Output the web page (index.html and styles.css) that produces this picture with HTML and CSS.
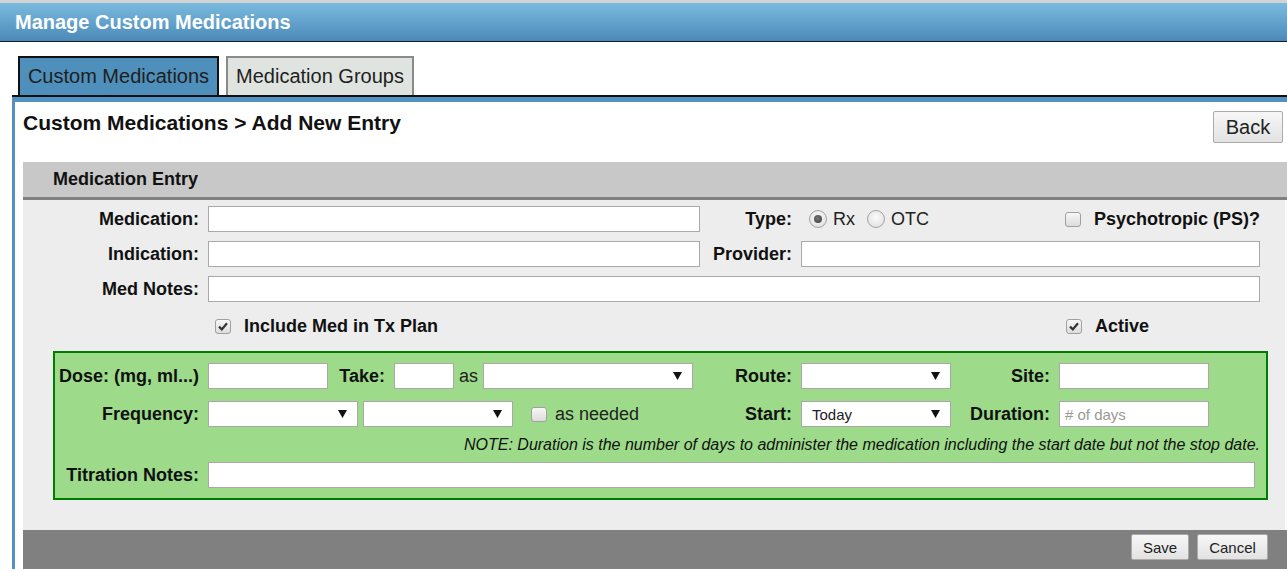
FILE: index.html
```html
<!DOCTYPE html>
<html>
<head>
<meta charset="utf-8">
<title>Manage Custom Medications</title>
<link rel="stylesheet" href="styles.css">
</head>
<body>
<header class="topbar"><h1 class="topbar-title">Manage Custom Medications</h1></header>
<nav class="tabs">
  <div class="tab tab-active">Custom Medications</div>
  <div class="tab tab-idle">Medication Groups</div>
</nav>
<main class="panel">
  <div class="title-row">
    <h2 class="page-title">Custom Medications &gt; Add New Entry</h2>
    <button class="btn btn-back">Back</button>
  </div>
  <section class="entry">
    <div class="entry-head">Medication Entry</div>
    <div class="entry-body">
      <div class="top-row">
        <div class="lbl">Medication:</div>
        <div class="field"></div>
        <div class="lbl">Type:</div>
        <div class="cell-flex">
          <div class="radios">
            <span class="radio radio-on"></span><span class="opt-text rx">Rx</span>
            <span class="radio"></span><span class="opt-text">OTC</span>
          </div>
          <span class="chk"></span><span class="chk-label">Psychotropic (PS)?</span>
        </div>
      </div>
      <div class="top-row gap9">
        <div class="lbl">Indication:</div>
        <div class="field"></div>
        <div class="lbl">Provider:</div>
        <div class="field"></div>
      </div>
      <div class="top-row gap9">
        <div class="lbl">Med Notes:</div>
        <div class="field span-rest"></div>
      </div>
      <div class="top-row check-row">
        <div></div>
        <div class="cell-flex pad7">
          <span class="chk chk-on"><svg viewBox="0 0 16 15" width="16" height="15"><path d="M4 7.6 L6.8 10.4 L12 4.2" fill="none" stroke="#333" stroke-width="2.2"/></svg></span><span class="chk-label">Include Med in Tx Plan</span>
        </div>
        <div></div>
        <div class="cell-flex pad265">
          <span class="chk chk-on"><svg viewBox="0 0 16 15" width="16" height="15"><path d="M4 7.6 L6.8 10.4 L12 4.2" fill="none" stroke="#333" stroke-width="2.2"/></svg></span><span class="chk-label">Active</span>
        </div>
      </div>

      <div class="dosing">
        <div class="g-row">
          <div class="lbl">Dose: (mg, ml...)</div>
          <div class="cell-flex">
            <div class="field w120"></div>
            <div class="lbl w66">Take:</div>
            <div class="field w60"></div>
            <span class="as-text">as</span>
            <div class="select grow"><span></span><svg class="arrow" viewBox="0 0 9 8" width="9" height="8"><polygon points="0,0 9,0 4.5,8" fill="#111"/></svg></div>
          </div>
          <div class="lbl">Route:</div>
          <div class="select"><span></span><svg class="arrow" viewBox="0 0 9 8" width="9" height="8"><polygon points="0,0 9,0 4.5,8" fill="#111"/></svg></div>
          <div class="lbl">Site:</div>
          <div class="field"></div>
        </div>
        <div class="g-row gap12">
          <div class="lbl">Frequency:</div>
          <div class="cell-flex">
            <div class="select w150"><span></span><svg class="arrow" viewBox="0 0 9 8" width="9" height="8"><polygon points="0,0 9,0 4.5,8" fill="#111"/></svg></div>
            <div class="select w150 ml5"><span></span><svg class="arrow" viewBox="0 0 9 8" width="9" height="8"><polygon points="0,0 9,0 4.5,8" fill="#111"/></svg></div>
            <span class="chk ml18"></span><span class="plain-text">as needed</span>
          </div>
          <div class="lbl">Start:</div>
          <div class="select"><span class="sel-text">Today</span><svg class="arrow" viewBox="0 0 9 8" width="9" height="8"><polygon points="0,0 9,0 4.5,8" fill="#111"/></svg></div>
          <div class="lbl">Duration:</div>
          <div class="field"><span class="placeholder"># of days</span></div>
        </div>
        <div class="note">NOTE: Duration is the number of days to administer the medication including the start date but not the stop date.</div>
        <div class="g-row">
          <div class="lbl">Titration Notes:</div>
          <div class="field span-titr"></div>
        </div>
      </div>
    </div>
    <div class="entry-foot">
      <button class="btn btn-small">Save</button>
      <button class="btn btn-small btn-cancel">Cancel</button>
    </div>
  </section>
</main>
</body>
</html>
```

FILE: styles.css
```css
html, body {
  margin: 0;
  padding: 0;
  background: #fff;
  overflow: hidden;
  height: 571px;
  font-family: "Liberation Sans", Arial, sans-serif;
  color: #111;
}

.topbar {
  border-top: 3px solid #d3d3d3;
  border-bottom: 1px solid #1a1a1a;
  background: linear-gradient(#7bbadf, #4b8ab8);
  height: 38px;
}
.topbar-title {
  margin: 0;
  padding-left: 15px;
  font-size: 20px;
  line-height: 38px;
  font-weight: bold;
  color: #fff;
}

.tabs {
  display: flex;
  gap: 7px;
  padding: 14px 0 0 18px;
  height: 39px;
}
.tab {
  box-sizing: border-box;
  height: 39px;
  font-size: 20px;
  line-height: 37px;
  text-align: center;
  color: #1e1e1e;
  border-style: solid;
  border-width: 2px 2px 0 2px;
}
.tab-active {
  width: 201px;
  background: #4f8fbb;
  border-color: #111;
}
.tab-idle {
  width: 188px;
  background: #e0e4e0;
  border-color: #8a8a8a;
}

.panel {
  display: block;
  margin-left: 12px;
  border-top: 2px solid #111;
  box-shadow: inset 3px 5px 0 #5392bf;
  padding: 5px 0 0 3px;
  height: 474px;
  box-sizing: border-box;
}

.title-row {
  display: flex;
  justify-content: space-between;
  align-items: flex-start;
  height: 60px;
  box-sizing: border-box;
  padding: 9px 4px 0 8px;
}
.page-title {
  margin: 0;
  font-size: 21px;
  line-height: 24px;
  font-weight: bold;
  color: #111;
}
.btn {
  font-family: "Liberation Sans", Arial, sans-serif;
  background: linear-gradient(#f7f7f7, #e2e2e2);
  border: 1px solid #ababab;
  border-radius: 2px;
  color: #222;
  padding: 0;
  cursor: pointer;
}
.btn-back {
  width: 70px;
  height: 32px;
  font-size: 20px;
}

.entry {
  margin-left: 8px;
}
.entry-head {
  height: 35px;
  line-height: 35px;
  background: #c8c8c8;
  border-bottom: 3px solid #808080;
  padding-left: 30px;
  font-size: 18px;
  font-weight: bold;
}
.entry-body {
  background: #ededed;
  margin-right: 2px;
  padding: 6px 0 30px 0;
}

.top-row {
  display: grid;
  grid-template-columns: 185px 492px 101px 459px;
  height: 26px;
  align-items: center;
}
.gap9 { margin-top: 9px; }
.check-row { margin-top: 11px; }

.lbl {
  box-sizing: border-box;
  text-align: right;
  padding-right: 9px;
  font-size: 18px;
  font-weight: bold;
  white-space: nowrap;
  color: #111;
}
.field {
  box-sizing: border-box;
  height: 26px;
  background: #fff;
  border: 1px solid #a9a9a9;
  display: flex;
  align-items: center;
}
.span-rest { grid-column: 2 / 5; }

.cell-flex {
  display: flex;
  align-items: center;
  height: 26px;
}
.pad7 { padding-left: 7px; }
.pad265 { padding-left: 265px; }

.radios {
  display: flex;
  align-items: center;
  width: 265px;
  box-sizing: border-box;
  padding-left: 8px;
}
.radio {
  box-sizing: border-box;
  width: 18px;
  height: 18px;
  border-radius: 50%;
  border: 1px solid #a3a3a3;
  background: radial-gradient(circle at 50% 40%, #fbfbfb, #dcdcdc);
  display: flex;
  align-items: center;
  justify-content: center;
}
.radio-on::after {
  content: "";
  width: 8px;
  height: 8px;
  border-radius: 50%;
  background: radial-gradient(circle at 45% 40%, #777, #3a3a3a);
}
.opt-text {
  font-size: 18px;
  margin-left: 6px;
  color: #222;
}
.rx { margin-right: 12px; }

.chk {
  box-sizing: border-box;
  width: 16px;
  height: 15px;
  border: 1px solid #a0a0a0;
  border-radius: 3px;
  background: linear-gradient(#f7f7f7, #dcdcdc);
  display: flex;
  align-items: center;
  justify-content: center;
  flex: none;
}
.chk svg { display: block; margin: -1px; }
.chk-label {
  margin-left: 13px;
  font-size: 18px;
  font-weight: bold;
  white-space: nowrap;
}

.dosing {
  box-sizing: border-box;
  width: 1215px;
  margin: 12px 0 0 30px;
  background: #9ddb8b;
  border: 2px solid #007d00;
  padding: 10px 0;
}
.g-row {
  display: grid;
  grid-template-columns: 153px 485px 108px 150px 108px 150px 57px;
  height: 26px;
  align-items: center;
}
.gap12 { margin-top: 12px; }

.w120 { width: 120px; }
.w60 { width: 60px; }
.w66 { width: 66px; }
.w150 { width: 150px; }
.ml5 { margin-left: 5px; }
.ml18 { margin-left: 18px; }
.grow { flex: 1; }

.as-text {
  font-size: 18px;
  color: #222;
  margin: 0 5px;
}
.plain-text {
  font-size: 18px;
  color: #222;
  margin-left: 8px;
}

.select {
  box-sizing: border-box;
  height: 26px;
  background: #fff;
  border: 1px solid #a9a9a9;
  display: flex;
  align-items: center;
  justify-content: space-between;
  padding: 0 10px 0 10px;
}
.arrow { display: block; }
.sel-text {
  font-size: 15px;
  color: #222;
}
.placeholder {
  font-size: 15px;
  color: #999;
  padding-left: 5px;
}

.note {
  height: 35px;
  line-height: 35px;
  text-align: right;
  padding-right: 6px;
  font-size: 16px;
  font-style: italic;
  color: #111;
}
.span-titr {
  grid-column: 2 / -1;
  margin-right: 11px;
}

.entry-foot {
  display: flex;
  justify-content: flex-end;
  gap: 8px;
  background: #808080;
  height: 39px;
  box-sizing: border-box;
  padding: 4px 19px 0 0;
}
.btn-small {
  height: 26px;
  width: 58px;
  font-size: 15px;
}
.btn-cancel { width: 71px; }
```
